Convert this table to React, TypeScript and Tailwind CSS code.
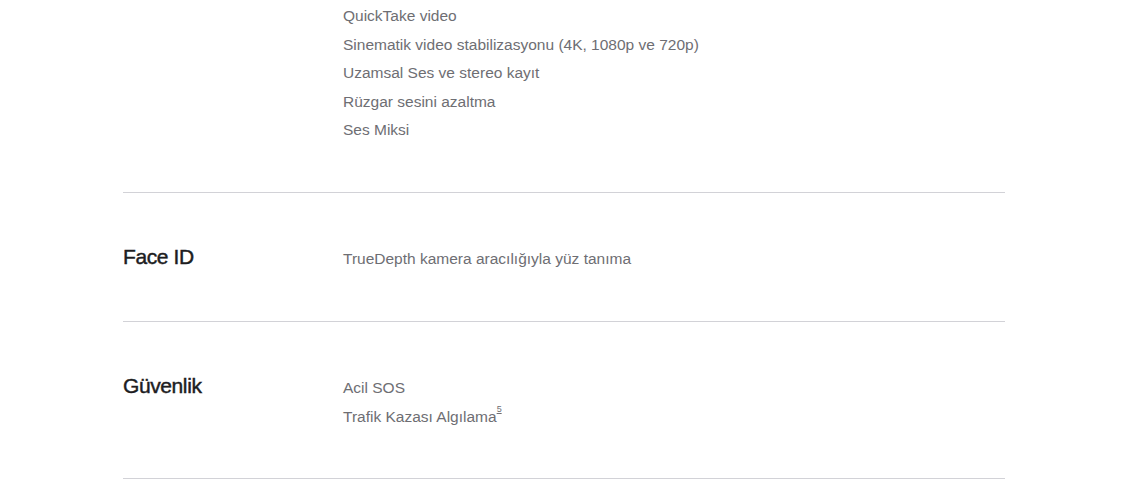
const sections: { title?: string; items: React.ReactNode[]; pad: string }[] = [
  {
    pad: 'pt-[2px] pb-[47px]',
    items: [
      'QuickTake video',
      'Sinematik video stabilizasyonu (4K, 1080p ve 720p)',
      'Uzamsal Ses ve stereo kayıt',
      'Rüzgar sesini azaltma',
      'Ses Miksi',
    ],
  },
  { title: 'Face ID', pad: 'pt-[52px] pb-[48px]', items: ['TrueDepth kamera aracılığıyla yüz tanıma'] },
  {
    title: 'Güvenlik',
    pad: 'pt-[52px] pb-[47px]',
    items: [
      'Acil SOS',
      <>
        Trafik Kazası Algılama<sup className="text-[9px] align-[5px] underline">5</sup>
      </>,
    ],
  },
];

export default function App() {
  return (
    <div className="min-h-screen w-full bg-white font-['Liberation_Sans',Arial,sans-serif]">
      <div className="ml-[123px] w-[882px]">
        {sections.map((s, i) => (
          <div key={i} className={`flex border-b border-[#d2d2d7] ${s.pad}`}>
            <div className="w-[220px] shrink-0">
              {s.title && (
                <h3 className="-mt-[1px] text-[21px] font-medium leading-[26px] text-[#1d1d1f] tracking-[-0.4px] [-webkit-text-stroke:0.45px_#1d1d1f]">
                  {s.title}
                </h3>
              )}
            </div>
            <ul className="flex flex-col">
              {s.items.map((it, j) => (
                <li key={j} className="text-[15.5px] leading-[28.5px] text-[#6e6e73]">
                  {it}
                </li>
              ))}
            </ul>
          </div>
        ))}
      </div>
    </div>
  );
}
